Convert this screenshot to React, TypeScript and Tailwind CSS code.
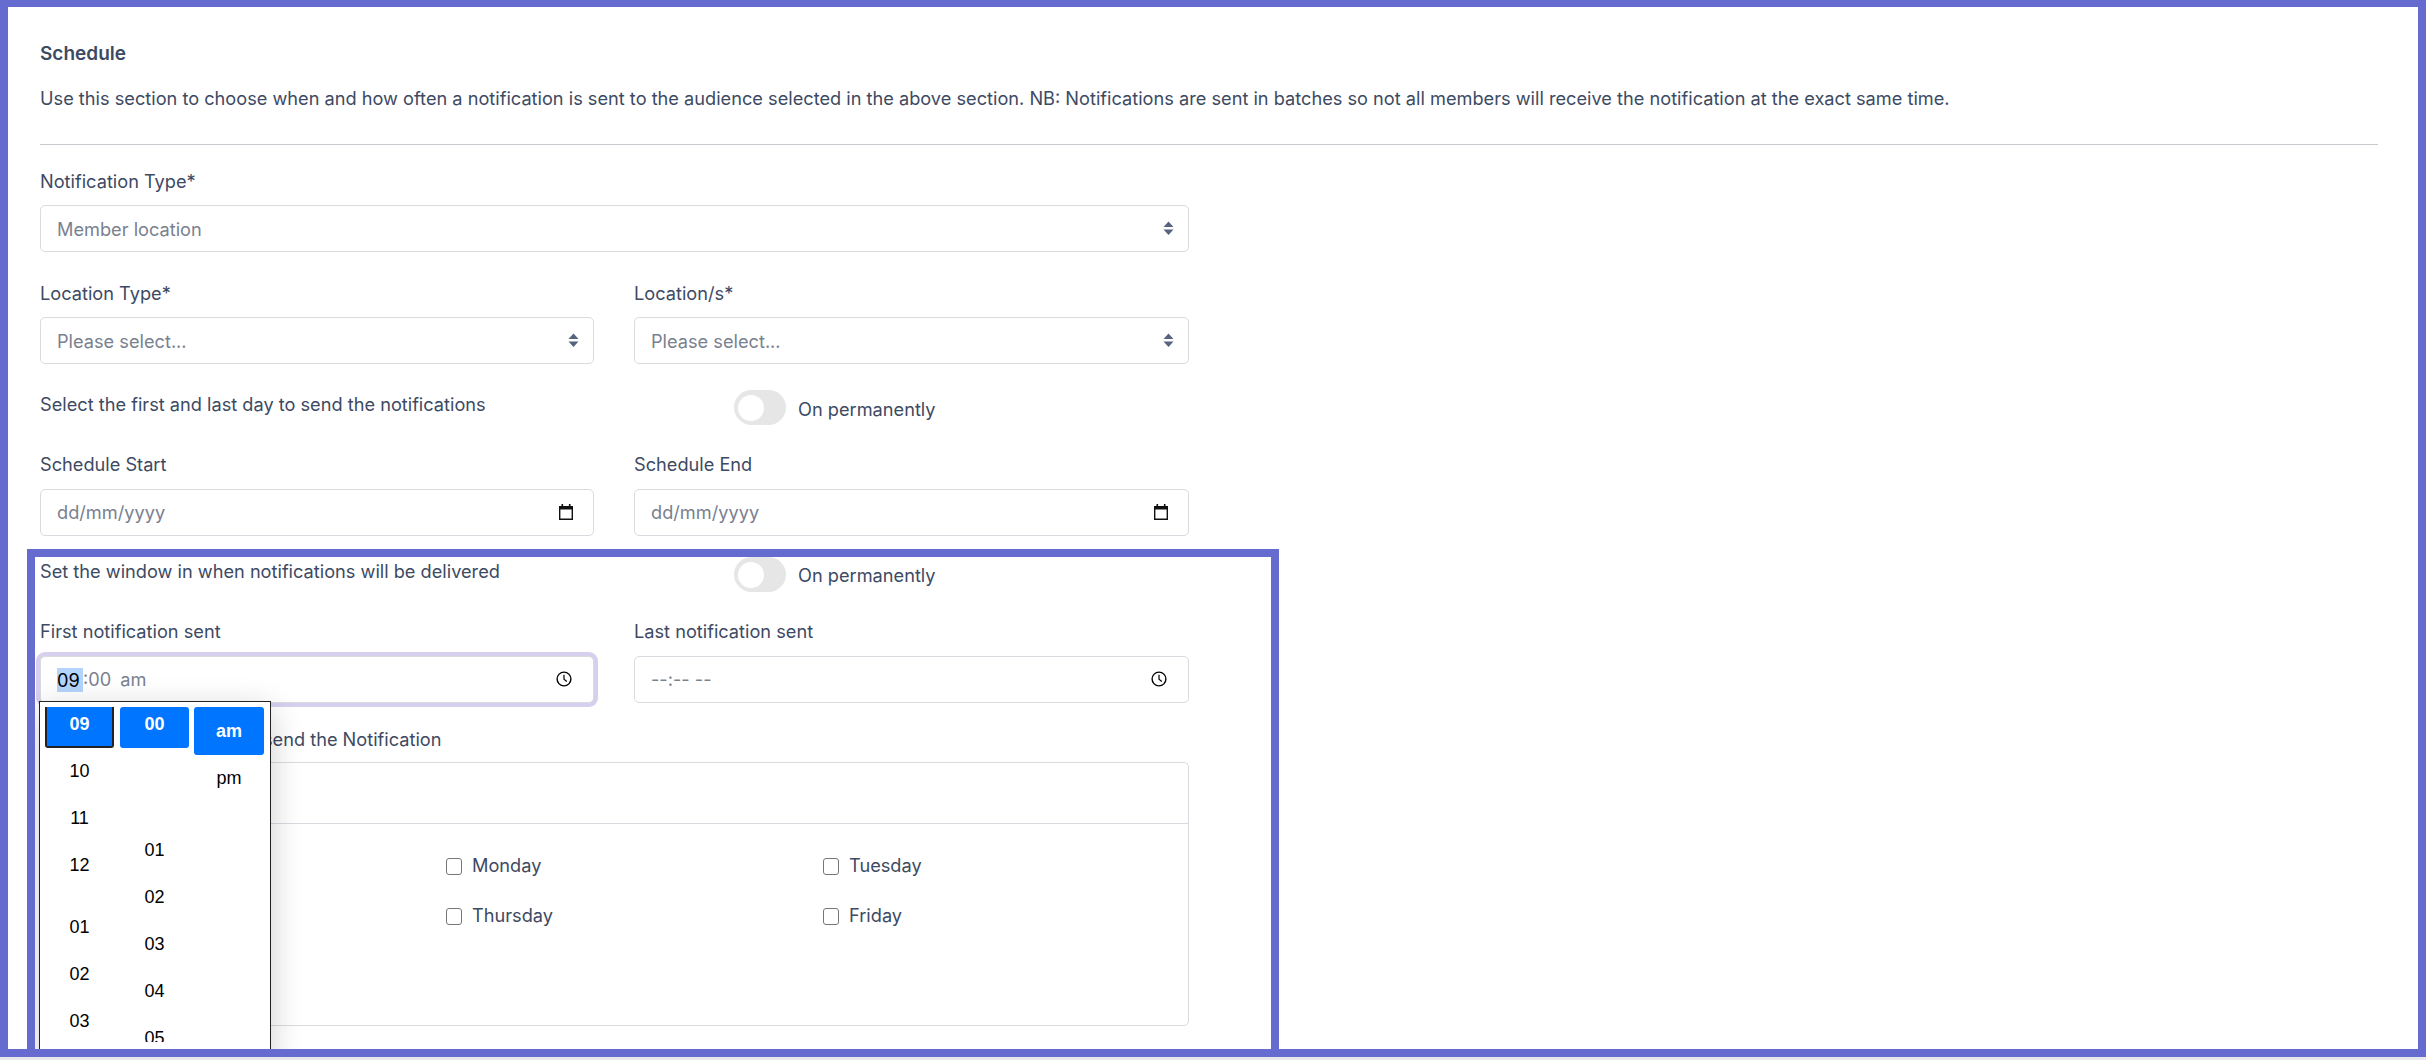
const sans = "font-['Inter','Noto_Sans',sans-serif]";

function SelectArrows() {
  return (
    <svg width="11" height="15" viewBox="0 0 11 15" className="mb-[2px] shrink-0">
      <path d="M5.5 0.5 10.5 6H0.5Z" fill="#56647f" />
      <path d="M5.5 14 0.5 8.5H10.5Z" fill="#56647f" />
    </svg>
  );
}

function CalendarIcon() {
  return (
    <svg width="16" height="18" viewBox="0 0 16 18" className="mb-[3px] shrink-0">
      <path d="M1 3h14v14H1Z M2.4 6.5v9.1h11.2V6.5Z" fill="#111" fillRule="evenodd" />
      <path d="M3.5 1h1.6v3H3.5ZM10.9 1h1.6v3h-1.6Z" fill="#111" />
    </svg>
  );
}

function ClockIcon() {
  return (
    <svg width="16" height="16" viewBox="0 0 16 16" fill="none" stroke="#000" className="mb-[3px] shrink-0">
      <circle cx="8" cy="8" r="6.9" strokeWidth="1.4" />
      <path d="M8 3.8v4.5l2.8 2.2" strokeWidth="1.2" />
    </svg>
  );
}

function Field({ children, focus, pr }: { children: React.ReactNode; focus?: boolean; pr: string }) {
  return (
    <div
      className={
        "flex h-[47px] items-center justify-between rounded-[5px] border border-[#d8dbe0] bg-white pl-4 pt-px text-[18.2px] text-[#79818f] " +
        pr +
        (focus ? " border-[#c9bfe8] shadow-[0_0_0_4px_#d6cfee]" : "")
      }
    >
      {children}
    </div>
  );
}

function Toggle() {
  return (
    <div className="flex h-[35px] w-[52px] shrink-0 items-center rounded-full bg-[#e6e6e6] pl-1">
      <div className="h-[26px] w-[26px] rounded-full bg-white" />
    </div>
  );
}

function Label({ children }: { children: React.ReactNode }) {
  return <div className="h-6 whitespace-nowrap leading-6">{children}</div>;
}

function Day({ name }: { name: string }) {
  return (
    <div className="flex h-[50px] items-center gap-[10px]">
      <div className="h-[17px] w-[16px] rounded-[3px] border border-[#767676] bg-white" />
      <span>{name}</span>
    </div>
  );
}

const hours = ["10", "11", "12"];
const hoursAfter = ["01", "02", "03"];
const minutes = ["01", "02", "03", "04", "05"];

function TimePopup() {
  return (
    <div className="absolute left-[-1px] top-[45px] z-10 flex h-[360px] w-[232px] gap-[6px] overflow-hidden border border-[#222] bg-white pl-[5px] pt-[5px] font-['Liberation_Sans',Arial,sans-serif] text-[18px] text-black shadow-[0_8px_30px_rgba(0,0,0,0.2)]">
      <div className="w-[69px] text-center">
        <div className="flex h-[41px] items-center justify-center rounded-b-[3px] border-x-2 border-b-2 border-[#222] bg-[#0075ff] pb-1 font-bold text-white">09</div>
        <div>
          {hours.map((h) => (
            <div key={h} className="flex h-[47px] items-center justify-center">{h}</div>
          ))}
        </div>
        <div className="pt-[15px]">
          {hoursAfter.map((h) => (
            <div key={h} className="flex h-[47px] items-center justify-center">{h}</div>
          ))}
        </div>
      </div>
      <div className="h-[335px] w-[69px] overflow-hidden text-center">
        <div className="flex h-[41px] items-center justify-center rounded-[3px] bg-[#0075ff] pb-[6px] font-bold text-white">00</div>
        <div className="pt-[79px]">
          {minutes.map((m) => (
            <div key={m} className="flex h-[47px] items-center justify-center">{m}</div>
          ))}
        </div>
      </div>
      <div className="ml-[-1px] w-[70px] text-center">
        <div className="flex h-[48px] items-center justify-center rounded-[3px] bg-[#0075ff] font-bold text-white">am</div>
        <div className="flex h-[47px] items-center justify-center">pm</div>
      </div>
    </div>
  );
}

export default function App() {
  return (
    <div className={"h-[1060px] w-[2426px] overflow-hidden bg-[#e8e8ec] text-[18.2px] text-[#3d4a63] " + sans}>
      <div className="flex h-[1057px] flex-col overflow-hidden border-8 border-t-[7px] border-[#656bcf] bg-white pl-[19px]">
        <div className="pl-[13px] pr-[40px] pt-[34px]">
          <Label><span className="text-[19px] font-semibold">Schedule</span></Label>
          <div className="mt-[21px]"><Label>Use this section to choose when and how often a notification is sent to the audience selected in the above section. NB: Notifications are sent in batches so not all members will receive the notification at the exact same time.</Label></div>
          <div className="mt-[34px] h-px bg-[#c9c9cf]" />
          <div className="mt-6 w-[1149px]">
            <Label>Notification Type*</Label>
            <div className="mt-3">
              <Field pr="pr-[14px]"><span className="pt-[2px]">Member location</span><SelectArrows /></Field>
            </div>
            <div className="mt-[29px] grid grid-cols-[554px_555px] gap-x-[40px]">
              <div>
                <Label>Location Type*</Label>
                <div className="mt-3"><Field pr="pr-[14px]"><span className="pt-[2px]">Please select...</span><SelectArrows /></Field></div>
              </div>
              <div>
                <Label>Location/s*</Label>
                <div className="mt-3"><Field pr="pr-[14px]"><span className="pt-[2px]">Please select...</span><SelectArrows /></Field></div>
              </div>
            </div>
            <div className="mt-[26px] flex h-[35px] items-start">
              <div className="mt-[2px] w-[694px]"><Label>Select the first and last day to send the notifications</Label></div>
              <Toggle />
              <div className="ml-3 mt-[7px]"><Label>On permanently</Label></div>
            </div>
            <div className="mt-[27px] grid grid-cols-[554px_555px] gap-x-[40px]">
              <div>
                <Label>Schedule Start</Label>
                <div className="mt-[13px]"><Field pr="pr-[19px]"><span>dd/mm/yyyy</span><CalendarIcon /></Field></div>
              </div>
              <div>
                <Label>Schedule End</Label>
                <div className="mt-[13px]"><Field pr="pr-[19px]"><span>dd/mm/yyyy</span><CalendarIcon /></Field></div>
              </div>
            </div>
          </div>
        </div>
        <div className="mt-[13px] w-[1252px] flex-1 overflow-hidden border-8 border-b-0 border-[#656bcf] bg-white pl-[5px]">
          <div className="w-[1149px]">
            <div className="flex h-[35px] items-start">
              <div className="mt-[2px] w-[694px]"><Label>Set the window in when notifications will be delivered</Label></div>
              <Toggle />
              <div className="ml-3 mt-[6px]"><Label>On permanently</Label></div>
            </div>
            <div className="mt-[27px] grid grid-cols-[554px_555px] gap-x-[40px]">
              <div>
                <Label>First notification sent</Label>
                <div className="relative mt-[13px]">
                  <Field focus pr="pr-[21px]">
                    <span className="flex items-center">
                      <span className="inline-block h-6 w-[26px] bg-[#b3d4fc] leading-6 text-black">09</span>
                      <span>:00</span>
                      <span className="ml-[9px]">am</span>
                    </span>
                    <ClockIcon />
                  </Field>
                  <TimePopup />
                </div>
              </div>
              <div>
                <Label>Last notification sent</Label>
                <div className="mt-[13px]"><Field pr="pr-[21px]"><span>--:-- --</span><ClockIcon /></Field></div>
              </div>
            </div>
            <div className="mt-6"><Label>Select the day of week to send the Notification</Label></div>
            <div className="mt-[11px] h-[264px] rounded-[5px] border border-[#d8dbe0]">
              <div className="h-[61px] border-b border-[#d8dbe0]" />
              <div className="grid grid-cols-[377px_377px_1fr] pl-[28px] pt-[17px]">
                {["Sunday", "Monday", "Tuesday", "Wednesday", "Thursday", "Friday", "Saturday"].map((d) => (
                  <Day key={d} name={d} />
                ))}
              </div>
            </div>
          </div>
        </div>
      </div>
    </div>
  );
}
